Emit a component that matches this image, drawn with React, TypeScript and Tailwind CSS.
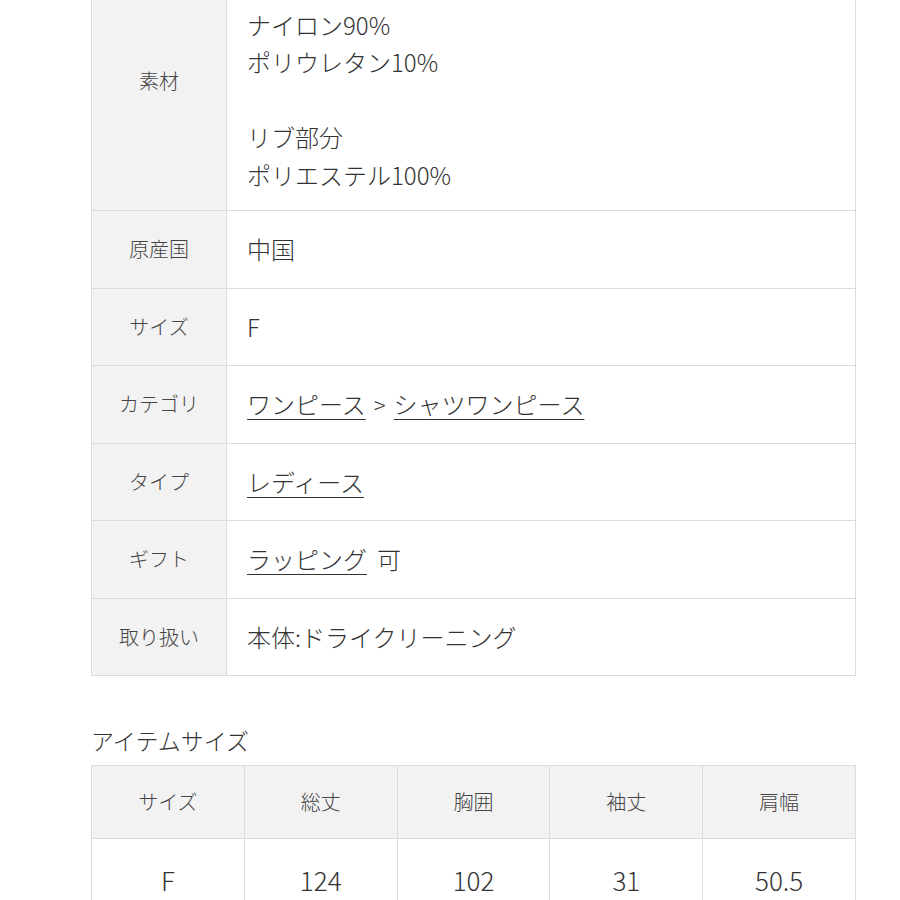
import React from "react";

const font = {
  fontFamily: '"Noto Sans CJK JP", "Noto Sans", sans-serif',
};

function Row({
  label,
  children,
  tall,
}: {
  label: string;
  children: React.ReactNode;
  tall?: boolean;
}) {
  return (
    <div className={`flex border-b border-[#dcdcdc] ${tall ? "h-[260px]" : "h-[77.5px]"}`}>
      <div className="w-[135px] shrink-0 bg-[#f2f2f2] border-r border-[#dcdcdc] flex items-center justify-center text-[20px] text-[#444]">
        {label}
      </div>
      <div className="flex-1 flex items-center pl-[20px] text-[24px] text-[#333]">{children}</div>
    </div>
  );
}

function Link({ children }: { children: React.ReactNode }) {
  return (
    <span className="underline decoration-1 underline-offset-[5px] decoration-[#333]">{children}</span>
  );
}

export default function App() {
  const heads = ["サイズ", "総丈", "胸囲", "袖丈", "肩幅"];
  const vals = ["F", "124", "102", "31", "50.5"];
  return (
    <div className="w-[900px] h-[900px] overflow-hidden bg-white font-light" style={font}>
      <div className="pl-[91px] -mt-[49px]">
        <div className="w-[765px] border-l border-r border-[#dcdcdc]">
          <Row label="素材" tall>
            <div className="leading-[37.5px]">
              <div>本体</div>
              <div>ナイロン90%</div>
              <div>ポリウレタン10%</div>
              <div>&nbsp;</div>
              <div>リブ部分</div>
              <div>ポリエステル100%</div>
            </div>
          </Row>
          <Row label="原産国">中国</Row>
          <Row label="サイズ">F</Row>
          <Row label="カテゴリ">
            <span>
              <Link>ワンピース</Link>
              <span className="mx-[8px] text-[22px]">&gt;</span>
              <Link>シャツワンピース</Link>
            </span>
          </Row>
          <Row label="タイプ">
            <Link>レディース</Link>
          </Row>
          <Row label="ギフト">
            <span>
              <Link>ラッピング</Link>
              <span className="ml-[10px]">可</span>
            </span>
          </Row>
          <Row label="取り扱い">本体:ドライクリーニング</Row>
        </div>

        <div className="mt-[48px] mb-[9px] h-[32px] leading-[32px] text-[23px] text-[#333]">アイテムサイズ</div>

        <div className="w-[765px] border-t border-l border-[#dcdcdc]">
          <div className="grid grid-cols-5 h-[73px] bg-[#f2f2f2] border-b border-[#dcdcdc]">
            {heads.map((h) => (
              <div key={h} className="flex items-center justify-center border-r border-[#dcdcdc] text-[20px] text-[#444]">
                {h}
              </div>
            ))}
          </div>
          <div className="grid grid-cols-5 h-[80px] bg-white">
            {vals.map((v, i) => (
              <div key={i} className="flex items-center justify-center border-r border-[#dcdcdc] text-[26px] text-[#333]">
                {v}
              </div>
            ))}
          </div>
        </div>
      </div>
    </div>
  );
}
